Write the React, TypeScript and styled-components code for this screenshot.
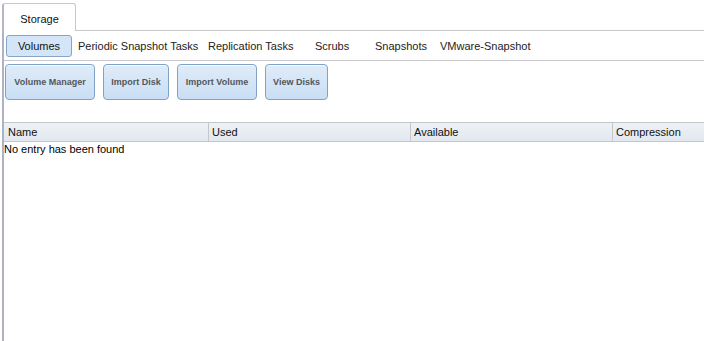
import React, { FC } from "react";
import styled, { createGlobalStyle } from "styled-components";

const GlobalStyle = createGlobalStyle`
  html, body {
    margin: 0;
    padding: 0;
    background: #ffffff;
    font-family: "Liberation Sans", Arial, sans-serif;
  }
`;

const Page = styled.div`
  height: 100vh;
  display: flex;
  flex-direction: column;
  padding-left: 2px;
  box-sizing: border-box;
  overflow: hidden;
`;

const TabBar = styled.div`
  display: flex;
  align-items: flex-end;
  height: 31px;
  border-bottom: 1px solid #c8c8cc;
  box-sizing: border-box;
`;

const MainTab = styled.div`
  width: 74px;
  height: 28px;
  margin-bottom: -1px;
  padding-top: 2px;
  box-sizing: border-box;
  background: #ffffff;
  border: 1px solid #c8c8cc;
  border-left: 2px solid #b4b8c6;
  border-bottom: none;
  border-radius: 3px 3px 0 0;
  display: flex;
  align-items: center;
  justify-content: center;
  font-size: 11px;
  color: #111;
`;

const Panel = styled.div`
  flex: 1;
  border-left: 2px solid #aeb2c2;
  display: flex;
  flex-direction: column;
`;

const SubTabs = styled.div`
  display: flex;
  align-items: center;
  height: 30px;
  padding-left: 2px;
  border-bottom: 1px solid #c8c8cc;
  box-sizing: border-box;
`;

const ActiveSubTab = styled.div`
  width: 66px;
  height: 22px;
  box-sizing: border-box;
  margin-right: 6px;
  background: #d4e5f7;
  border: 1px solid #86a6c8;
  border-radius: 3px;
  display: flex;
  align-items: center;
  justify-content: center;
  font-size: 11px;
  color: #111;
`;

const SubTab = styled.div<{ $w: number }>`
  width: ${({ $w }) => $w}px;
  font-size: 11px;
  color: #222;
  white-space: nowrap;
`;

const Toolbar = styled.div`
  display: flex;
  gap: 8px;
  padding: 3px 0 0 1px;
  height: 61px;
  box-sizing: border-box;
`;

const ActionButton = styled.button<{ $w: number }>`
  width: ${({ $w }) => $w}px;
  height: 36px;
  padding: 0;
  box-sizing: border-box;
  border: 1px solid #7fa2c6;
  border-radius: 4px;
  background: linear-gradient(#dfecf9, #c9def4);
  box-shadow: inset 0 1px 0 rgba(255, 255, 255, 0.7);
  font-family: "Liberation Sans", Arial, sans-serif;
  font-weight: bold;
  font-size: 9px;
  color: #52575d;
  cursor: pointer;
`;

const Table = styled.div`
  display: flex;
  flex-direction: column;
`;

const HeaderRow = styled.div`
  display: grid;
  grid-template-columns: 204px 202px 202px 1fr;
  height: 20px;
  background: linear-gradient(#eef2f6, #e1e8ef);
  border-top: 1px solid #c4c6c8;
  border-bottom: 1px solid #c4c6c8;
  box-sizing: border-box;
`;

const HeaderCell = styled.div<{ $first?: boolean }>`
  border-left: ${({ $first }) => ($first ? "none" : "1px solid #c4c6c8")};
  padding-left: ${({ $first }) => ($first ? "4px" : "3px")};
  font-size: 11px;
  color: #111;
  line-height: 18px;
  white-space: nowrap;
`;

const EmptyText = styled.div`
  font-size: 11px;
  color: #000;
  line-height: 14px;
`;

const subTabs = [
  { label: "Periodic Snapshot Tasks", w: 130 },
  { label: "Replication Tasks", w: 107 },
  { label: "Scrubs", w: 60 },
  { label: "Snapshots", w: 65 },
  { label: "VMware-Snapshot", w: 120 },
];

const actions = [
  { label: "Volume Manager", w: 90 },
  { label: "Import Disk", w: 66 },
  { label: "Import Volume", w: 80 },
  { label: "View Disks", w: 63 },
];

const columns = ["Name", "Used", "Available", "Compression"];

const App: FC = () => {
  return (
    <>
      <GlobalStyle />
      <Page>
        <TabBar>
          <MainTab>Storage</MainTab>
        </TabBar>
        <Panel>
          <SubTabs>
            <ActiveSubTab>Volumes</ActiveSubTab>
            {subTabs.map((t) => (
              <SubTab key={t.label} $w={t.w}>
                {t.label}
              </SubTab>
            ))}
          </SubTabs>
          <Toolbar>
            {actions.map((a) => (
              <ActionButton key={a.label} $w={a.w}>
                {a.label}
              </ActionButton>
            ))}
          </Toolbar>
          <Table>
            <HeaderRow>
              {columns.map((c, i) => (
                <HeaderCell key={c} $first={i === 0}>
                  {c}
                </HeaderCell>
              ))}
            </HeaderRow>
            <EmptyText>No entry has been found</EmptyText>
          </Table>
        </Panel>
      </Page>
    </>
  );
};

export default App;
